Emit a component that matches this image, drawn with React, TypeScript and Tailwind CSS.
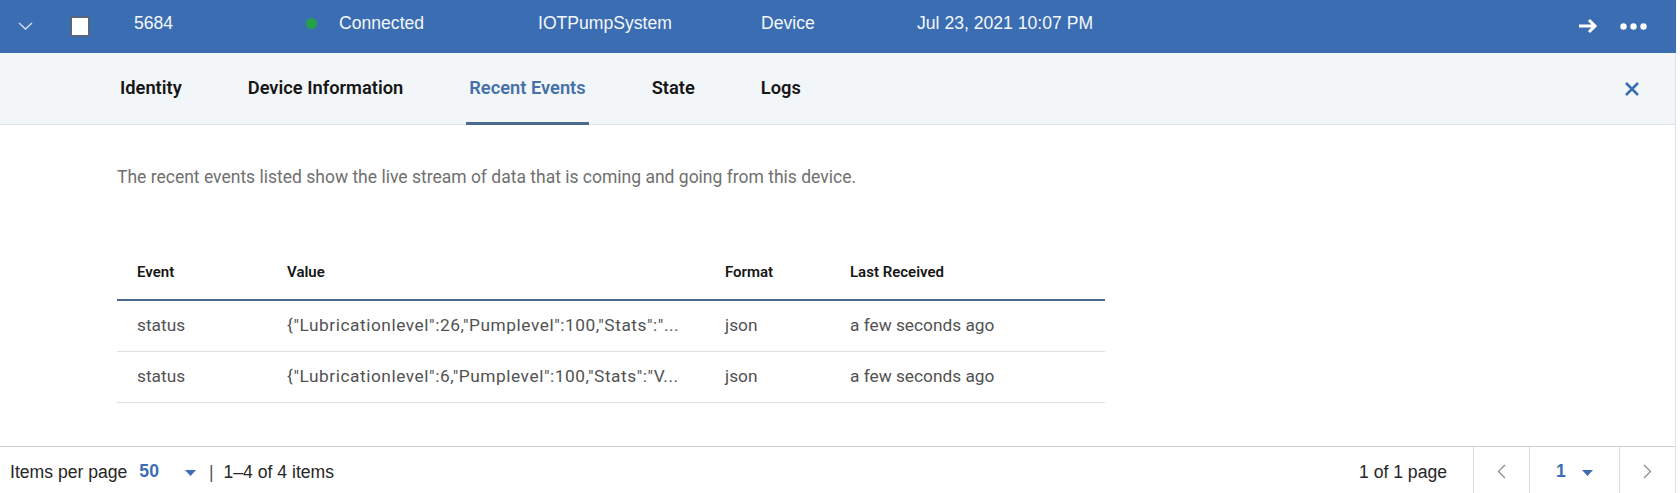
// Device row with expanded "Recent Events" panel

const tabs = ["Identity", "Device Information", "Recent Events", "State", "Logs"];

const events = [
    {
        event: "status",
        value: '{"Lubricationlevel":26,"Pumplevel":100,"Stats":"...',
        format: "json",
        received: "a few seconds ago",
    },
    {
        event: "status",
        value: '{"Lubricationlevel":6,"Pumplevel":100,"Stats":"V...',
        format: "json",
        received: "a few seconds ago",
    },
];

// 드롭다운 삼각형
function Caret() {
    return (
        <svg width="11" height="6" viewBox="0 0 11 6">
            <path d="M0 0 H11 L5.5 6 Z" fill="#3d6db5" />
        </svg>
    );
}

function DeviceRow() {
    return (
        <div className="w-[1676px] h-[53px] pb-[6px] bg-[#3b6db2] flex items-center text-[#f4f7fb] text-[17.6px] font-['Liberation_Sans',sans-serif]">
            <div className="w-[70px] pl-[18px] pt-[5px] flex items-center">
                <svg width="15" height="8" viewBox="0 0 15 8">
                    <path d="M1 1 L7.5 7 L14 1" fill="none" stroke="#d4e0f0" strokeWidth="1.4" />
                </svg>
            </div>
            <div className="w-[64px] pt-[5px] flex items-center">
                <div className="w-[20px] h-[21px] bg-white border-2 border-[#56667c] rounded-[2px]" />
            </div>
            <div className="w-[173px]">5684</div>
            <div className="w-[231px] flex items-center">
                <span className="w-[11px] h-[11px] -ml-[1px] rounded-full bg-[#24a148]" />
                <span className="ml-[22px]">Connected</span>
            </div>
            <div className="w-[223px]">IOTPumpSystem</div>
            <div className="w-[156px]">Device</div>
            <div className="flex-1">Jul 23, 2021 10:07 PM</div>
            <div className="flex items-center gap-[22px] pr-[29px] pt-[5px]">
                <svg width="20" height="16" viewBox="0 0 20 16">
                    <path d="M1 8 H17 M11 2 L17 8 L11 14" fill="none" stroke="white" strokeWidth="3" />
                </svg>
                <svg width="27" height="7" viewBox="0 0 27 7">
                    <circle cx="3.5" cy="3.5" r="3.2" fill="white" />
                    <circle cx="13.5" cy="3.5" r="3.2" fill="white" />
                    <circle cx="23.5" cy="3.5" r="3.2" fill="white" />
                </svg>
            </div>
        </div>
    );
}

function Tabs() {
    return (
        <div className="h-[72px] bg-[#f3f6f9] border-b border-[#e0e4e9] flex items-start pl-[117px] font-['Roboto',sans-serif]">
            <div className="h-[72px] flex items-stretch gap-[60px]">
                {tabs.map((t) => {
                    const active = t === "Recent Events";
                    return (
                        <div
                            key={t}
                            className={
                                "px-[3px] pt-[1px] flex items-center text-[18.3px] font-semibold border-b-[3px] " +
                                (active ? "border-[#4a6a90] text-[#4670a8]" : "border-transparent text-[#161616]")
                            }
                        >
                            {t}
                        </div>
                    );
                })}
            </div>
            <div className="ml-auto mr-[36px] h-[71px] flex items-center">
                <svg width="14" height="14" viewBox="0 0 14 14">
                    <path d="M1 1 L13 13 M13 1 L1 13" stroke="#3d6db5" strokeWidth="2.6" />
                </svg>
            </div>
        </div>
    );
}

function EventsTable() {
    return (
        <div className="mt-[56px] w-[988px] font-['Roboto',sans-serif]">
            <div className="h-[56px] flex items-center border-b-2 border-[#4a6a90] text-[15px] font-semibold text-[#161616]">
                <div className="w-[150px] pl-[20px]">Event</div>
                <div className="w-[438px] pl-[20px]">Value</div>
                <div className="w-[125px] pl-[20px]">Format</div>
                <div className="flex-1 pl-[20px]">Last Received</div>
            </div>
            {events.map((e, i) => (
                <div
                    key={i}
                    className="h-[51px] flex items-center border-b border-[#e0e0e0] text-[17.3px] text-[#525252]"
                >
                    <div className="w-[150px] pl-[20px]">{e.event}</div>
                    <div className="w-[438px] pl-[20px] whitespace-nowrap tracking-[0.55px]">{e.value}</div>
                    <div className="w-[125px] pl-[20px]">{e.format}</div>
                    <div className="flex-1 pl-[20px]">{e.received}</div>
                </div>
            ))}
        </div>
    );
}

function Pagination() {
    return (
        <div className="h-[47px] border-t border-[#d0d0d0] flex items-stretch text-[17.6px] text-[#262626] font-['Liberation_Sans',sans-serif]">
            <div className="flex items-center pl-[10px] pt-[5px]">
                <span>Items per page</span>
                <span className="ml-[12px] -mt-[3px] font-bold text-[#3d6db5]">50</span>
                <span className="ml-[26px] flex items-center">
                    <Caret />
                </span>
                <span className="ml-[13px] text-[#555]">|</span>
                <span className="ml-[10px]">1–4 of 4 items</span>
            </div>
            <div className="ml-auto flex items-center pr-[26px] pt-[5px]">1 of 1 page</div>
            <div className="w-[56px] border-l border-[#dcdcdc] flex items-center justify-center pt-[3px]">
                <svg width="9" height="15" viewBox="0 0 9 15">
                    <path d="M8 1 L1.5 7.5 L8 14" fill="none" stroke="#8d8d8d" strokeWidth="1.3" />
                </svg>
            </div>
            <div className="w-[90px] border-l border-[#dcdcdc] flex items-center pl-[26px] pt-[5px]">
                <span className="-mt-[3px] font-bold text-[#3d6db5]">1</span>
                <span className="ml-[16px] flex items-center">
                    <Caret />
                </span>
            </div>
            <div className="w-[56px] border-l border-[#dcdcdc] flex items-center justify-center pt-[3px]">
                <svg width="9" height="15" viewBox="0 0 9 15">
                    <path d="M1 1 L7.5 7.5 L1 14" fill="none" stroke="#8d8d8d" strokeWidth="1.3" />
                </svg>
            </div>
        </div>
    );
}

export default function App() {
    return (
        <div className="w-[1680px] h-[493px] bg-white flex flex-col overflow-hidden">
            <DeviceRow />
            <div className="w-[1676px] flex-1 flex flex-col border-r border-[#e0e0e0]">
                <Tabs />
                <div className="flex-1 pl-[117px] pt-[40px]">
                    <p className="text-[17.5px] leading-[24px] text-[#6f6f6f] font-['Roboto',sans-serif]">
                        The recent events listed show the live stream of data that is coming and going from this device.
                    </p>
                    <EventsTable />
                </div>
                <Pagination />
            </div>
        </div>
    );
}
